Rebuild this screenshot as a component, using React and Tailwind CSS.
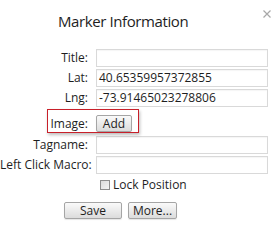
import React from 'react';

const font = { fontFamily: '"Open Sans", "Noto Sans", sans-serif' };

function Field({ label, value }) {
  return (
    <>
      <div className="text-right text-[12px] leading-[18px] text-[#1e1e1e] whitespace-nowrap">{label}</div>
      <div className="h-[18px] border border-[#d9d9d9] bg-white pl-[2px] text-[12px] leading-[16px] text-[#1e1e1e] shadow-[inset_0_1px_1px_rgba(0,0,0,0.04)]">
        {value}
      </div>
    </>
  );
}

function Btn({ children, w }) {
  return (
    <button
      className={`h-[17px] ${w} rounded-[2px] border border-[#a5a5a5] bg-gradient-to-b from-[#fafafa] to-[#dcdcdc] text-[12px] leading-[15px] text-[#1e1e1e] shadow-[0_1px_1px_rgba(0,0,0,0.1)]`}
    >
      {children}
    </button>
  );
}

export default function App() {
  return (
    <div className="relative w-[277px] h-[251px] bg-white overflow-hidden" style={font}>
      {/* close */}
      <svg className="absolute left-[263px] top-[10px]" width="8" height="8" viewBox="0 0 8 8">
        <path d="M0.5 0.5 L7.5 7.5 M7.5 0.5 L0.5 7.5" stroke="#a8a8a8" strokeWidth="1.2" />
      </svg>

      <div className="pt-[11px] pl-[58px] text-[15px] leading-[20px] tracking-[-0.4px] text-[#1e1e1e]">Marker Information</div>

      <div className="mt-[18px] grid grid-cols-[88px_172px] gap-x-[8px] gap-y-[2px] items-center">
        <Field label="Title:" value="" />
        <Field label="Lat:" value="40.65359957372855" />
        <Field label="Lng:" value="-73.91465023278806" />

        <div className="relative h-[25px] text-right text-[12px] leading-[25px] text-[#1e1e1e] pt-[2px]">
          Image:
          {/* annotation box */}
          <div className="absolute left-[47px] top-0 w-[92px] h-[24px] border-[1.5px] border-[#c8202a] shadow-[1px_2px_3px_rgba(0,0,0,0.25)] pointer-events-none" />
        </div>
        <div className="h-[25px] flex items-end pb-[2px]">
          <Btn w="w-[36px]">Add</Btn>
        </div>

        <Field label="Tagname:" value="" />
        <Field label="Left Click Macro:" value="" />
      </div>

      <div className="mt-[4px] pl-[100px] flex items-center gap-[3px]">
        <div className="w-[10px] h-[10px] border border-[#8e8e8e] bg-gradient-to-br from-[#dcdcdc] to-[#f4f4f4]" />
        <span className="text-[12px] leading-[14px] text-[#1e1e1e]">Lock Position</span>
      </div>

      <div className="mt-[10px] pl-[64px] flex gap-[6px]">
        <Btn w="w-[58px]">Save</Btn>
        <Btn w="w-[49px]">More...</Btn>
      </div>
    </div>
  );
}
